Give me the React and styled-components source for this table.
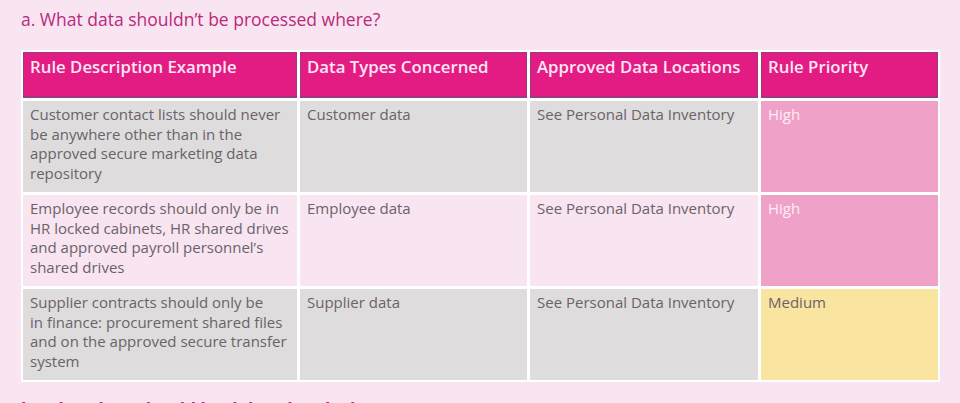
import React from 'react';
import styled, {createGlobalStyle} from 'styled-components';

const GlobalStyle = createGlobalStyle`
  body {
    margin: 0;
    background: #f9e4f1;
    font-family: "Open Sans", "Noto Sans", sans-serif;
  }
`;

const Page = styled.div`
  padding: 6px 20px 0 21px;
  height: 403px;
  box-sizing: border-box;
  overflow: hidden;
`;

const Heading = styled.h2`
  margin: ${props => props.next ? '14px 0 0' : '0'};
  font-size: 17.5px;
  font-weight: ${props => props.next ? 700 : 400};
  line-height: 26px;
  color: ${props => props.next ? '#cf1a7e' : '#b82a7c'};
`;

const Table = styled.div`
  margin-top: 18px;
  width: 919px;
  display: grid;
  grid-template-columns: 274px 227px 228px 177px;
  gap: 3px;
  padding: 2px;
  box-sizing: border-box;
  background: #ffffff;
`;

const HeadCell = styled.div`
  background: #e31c84;
  border: 1px solid #9a3a84;
  border-bottom-width: 2px;
  color: #fde6f3;
  font-weight: 600;
  font-size: 16.8px;
  line-height: 20px;
  padding: 4px 6px 19px;
`;

const Cell = styled.div`
  background: ${props => props.tone === 'grey' ? '#dfdcdd' : '#f9e4f1'};
  color: #6a6367;
  font-size: 15px;
  line-height: 19.5px;
  padding: 4px 7px 9px;
`;

const PriorityCell = styled(Cell)`
  background: ${props => props.level === 'High' ? '#f0a1c8' : '#f9e4a0'};
  color: ${props => props.level === 'High' ? '#fdeef5' : '#6a6367'};
`;

const Line = styled.span`
  display: block;
  white-space: nowrap;
`;

const rows = [
    {
        rule: ['Customer contact lists should never', 'be anywhere other than in the', 'approved secure marketing data', 'repository'],
        type: 'Customer data',
        priority: 'High',
        tone: 'grey'
    },
    {
        rule: ['Employee records should only be in', 'HR locked cabinets, HR shared drives', 'and approved payroll personnel’s', 'shared drives'],
        type: 'Employee data',
        priority: 'High',
        tone: 'pink'
    },
    {
        rule: ['Supplier contracts should only be', 'in finance: procurement shared files', 'and on the approved secure transfer', 'system'],
        type: 'Supplier data',
        priority: 'Medium',
        tone: 'grey'
    }
];

export default function App() {
    return (
        <Page>
            <GlobalStyle/>
            <Heading>a. What data shouldn’t be processed where?</Heading>
            <Table>
                <HeadCell>Rule Description Example</HeadCell>
                <HeadCell>Data Types Concerned</HeadCell>
                <HeadCell>Approved Data Locations</HeadCell>
                <HeadCell>Rule Priority</HeadCell>
                {rows.map(row => (
                    <React.Fragment key={row.type}>
                        <Cell tone={row.tone}>
                            {row.rule.map(line => <Line key={line}>{line}</Line>)}
                        </Cell>
                        <Cell tone={row.tone}>{row.type}</Cell>
                        <Cell tone={row.tone}>See Personal Data Inventory</Cell>
                        <PriorityCell level={row.priority}>{row.priority}</PriorityCell>
                    </React.Fragment>
                ))}
            </Table>
            <Heading next>b. What data should be deleted and when?</Heading>
        </Page>
    );
}
